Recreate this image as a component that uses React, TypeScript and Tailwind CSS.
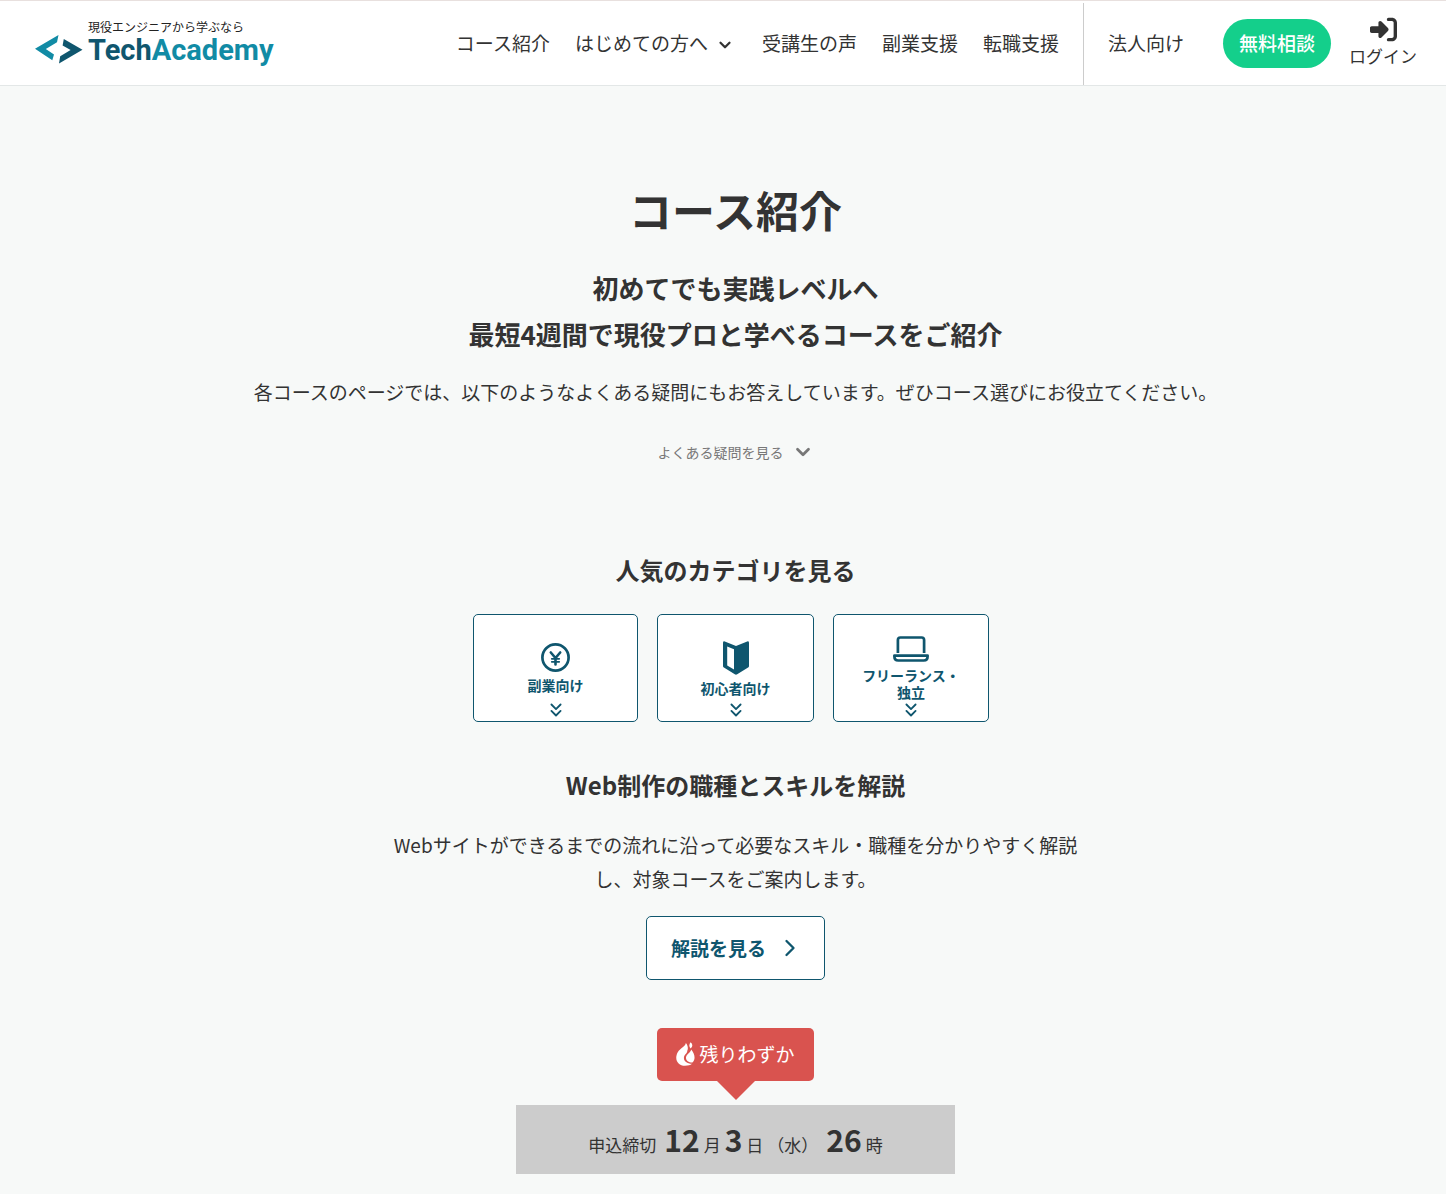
import { ReactNode } from "react";
import { ChevronDown, ChevronRight, ChevronsDown } from "lucide-react";
import { FaRightToBracket } from "react-icons/fa6";

type CategoryType = {
  label: ReactNode;
  icon: ReactNode;
  href: string;
  width: string;
};

const LogoMark: React.FC = () => (
  <svg width="48" height="30" viewBox="0 0 48 30" aria-hidden="true">
    <path d="M23.5 0 L0 13.8 L17.3 25.2 L19 19.5 L10.8 14 L22 7.2 Z" fill="#118ba5" />
    <path d="M28.8 4 L47.5 14.8 L24 28.6 L25.2 21.3 L35.6 15 L27.6 10.4 Z" fill="#0f566e" />
  </svg>
);

const YenIcon: React.FC = () => (
  <svg
    width="29"
    height="29"
    viewBox="0 0 29 29"
    fill="none"
    stroke="currentColor"
    strokeLinecap="round"
    aria-hidden="true"
  >
    <circle cx="14.5" cy="14.5" r="13.1" strokeWidth="2.7" />
    <path d="M9.8 9.5 L14.5 15 L19.2 9.5 M14.5 15 V21.5" strokeWidth="2.6" />
    <path d="M10.8 15.8 H18.2 M10.8 18.8 H18.2" strokeWidth="1.8" />
  </svg>
);

const BeginnerIcon: React.FC = () => (
  <svg width="26" height="34" viewBox="0 0 26 34" aria-hidden="true">
    <path
      fill="currentColor"
      fillRule="evenodd"
      d="M1.8 0.4 L13 5 L24.2 0.4 Q26 0 26 1.8 V25 Q26 26 25.1 26.6 L14.2 33.3 Q13 34 11.8 33.3 L0.9 26.6 Q0 26 0 25 V1.8 Q0 0 1.8 0.4 Z M4.2 5.4 V24.4 L11 28.5 V8.2 Z"
    />
  </svg>
);

const LaptopIcon: React.FC = () => (
  <svg
    width="36"
    height="26"
    viewBox="0 0 36 26"
    fill="none"
    stroke="currentColor"
    strokeWidth="2.7"
    aria-hidden="true"
  >
    <path d="M4.9 17 V4 Q4.9 1.5 7.4 1.5 H28.6 Q31.1 1.5 31.1 4 V17" />
    <path
      d="M1.4 19.6 H34.6 V20.6 Q34.6 24.5 30.8 24.5 H5.2 Q1.4 24.5 1.4 20.6 Z"
      strokeLinejoin="round"
    />
  </svg>
);

const FireIcon: React.FC = () => (
  <svg width="19" height="24" viewBox="0 0 19 24" aria-hidden="true">
    <path
      fill="#fff"
      d="M9.8 1 C9.6 4.5 4.5 5.5 1.6 10.5 C-2 17.5 2 23.7 9 23.7 C12 23.7 14.4 23.2 16 21.8 C9.8 21.8 6.6 17.8 8.4 13.8 C9.4 11.6 11.4 11 11.3 8.8 C12.4 6.5 11.8 3 9.8 1 Z"
    />
    <path fill="#fff" d="M14.6 0.3 C17 2.5 16.8 4.5 14.6 6.6 C12.8 4.5 13 2.5 14.6 0.3 Z" />
    <path
      fill="#fff"
      d="M15.2 7.5 C14.8 10.5 10.5 12 10 15.3 C9.8 18.5 12.4 20.4 16.4 20.4 C19.8 17.5 19 12 15.2 7.5 Z"
    />
  </svg>
);

const categories: CategoryType[] = [
  { label: "副業向け", icon: <YenIcon />, href: "#side-job", width: "w-[165px]" },
  { label: "初心者向け", icon: <BeginnerIcon />, href: "#beginner", width: "w-[157px]" },
  {
    label: (
      <>
        フリーランス・
        <br />
        独立
      </>
    ),
    icon: <LaptopIcon />,
    href: "#freelance",
    width: "w-[156px]",
  },
];

const Header: React.FC = () => {
  return (
    <header className="flex items-center justify-between border-t border-b border-t-[#e8e0de] border-b-[#e3e7e7] bg-white pt-[2px] pr-[29px] pl-[35px]">
      <a href="#top" className="flex items-end pb-1">
        <LogoMark />
        <span className="flex flex-col gap-px pl-[5px]">
          <span className="text-[12px] leading-4 text-[#222]">現役エンジニアから学ぶなら</span>
          <span className="font-['Roboto'] text-[29px] leading-[29px] font-bold text-[#0f566e]">
            Tech<span className="text-[#118ba5]">Academy</span>
          </span>
        </span>
      </a>
      <div className="flex items-center">
        <nav className="flex items-center gap-[25px] pr-6 pb-[2px] text-[19px] whitespace-nowrap">
          <a href="#courses">コース紹介</a>
          <button type="button" className="flex items-center gap-2 pr-[3px]">
            はじめての方へ
            <ChevronDown size={18} strokeWidth={3} className="mt-1" />
          </button>
          <a href="#voice">受講生の声</a>
          <a href="#side">副業支援</a>
          <a href="#career">転職支援</a>
        </nav>
        <div className="flex h-[82px] items-center border-l border-[#ccc] pb-[2px] pl-6 whitespace-nowrap">
          <a href="#corporate" className="text-[19px]">
            法人向け
          </a>
          <a
            href="#consult"
            className="ml-[39px] rounded-full bg-[#14cf8b] px-4 pt-[9px] pb-[11px] text-[19px] leading-[29px] font-medium text-white"
          >
            無料相談
          </a>
          <a
            href="#login"
            className="ml-[18px] flex flex-col items-center gap-px pb-[3px] text-[17px] leading-6"
          >
            <FaRightToBracket size={27} />
            ログイン
          </a>
        </div>
      </div>
    </header>
  );
};

const App: React.FC = () => {
  return (
    <div
      id="top"
      className="min-h-screen bg-[#f7f9f8] pb-5 font-['Noto_Sans_CJK_JP',sans-serif] text-[#333]"
      lang="ja"
    >
      <Header />
      <main className="flex flex-col items-center pt-[91px] pl-[25px] text-center">
        <h1 className="text-[43px] leading-[64px] font-bold">コース紹介</h1>
        <p className="mt-6 text-[26px] leading-[46px] font-bold">
          初めてでも実践レベルへ
          <br />
          最短4週間で現役プロと学べるコースをご紹介
        </p>
        <p className="mt-[18px] text-[19px] leading-[34px]">
          各コースのページでは、以下のようなよくある疑問にもお答えしています。ぜひコース選びにお役立てください。
        </p>
        <button
          type="button"
          className="mt-[31px] flex items-center gap-2 text-[14px] leading-6 text-[#777]"
        >
          よくある疑問を見る
          <ChevronDown size={22} strokeWidth={3} />
        </button>

        <h2 className="mt-[88px] text-[24px] leading-9 font-bold">人気のカテゴリを見る</h2>
        <div className="mt-[26px] flex gap-[19px] pr-[9px]">
          {categories.map((category) => (
            <a
              key={category.href}
              href={category.href}
              className={`${category.width} flex h-[108px] flex-col items-center rounded-[5px] border border-[#0f566e] bg-white text-[#0f566e]`}
            >
              <span className="flex flex-1 flex-col items-center justify-center gap-[5px] pt-[17px] text-[14px] leading-[17px] font-bold">
                {category.icon}
                <span>{category.label}</span>
              </span>
              <ChevronsDown size={22} strokeWidth={2} className="-mt-1.5" />
            </a>
          ))}
        </div>

        <h2 className="mt-[45px] text-[24px] leading-9 font-bold">Web制作の職種とスキルを解説</h2>
        <p className="mt-[25px] max-w-[700px] text-[19px] leading-[34px]">
          Webサイトができるまでの流れに沿って必要なスキル・職種を分かりやすく解説し、対象コースをご案内します。
        </p>
        <a
          href="#guide"
          className="mt-5 flex h-16 items-center gap-[10px] rounded-[5px] border border-[#0f566e] bg-white pr-5 pl-6 text-[19px] font-bold text-[#0f566e]"
        >
          解説を見る
          <ChevronRight size={28} strokeWidth={2} />
        </a>

        <div className="mt-12 flex items-center gap-1 rounded-[5px] bg-[#d9534f] px-[19px] pb-px text-[19px] leading-[52px] text-white">
          <FireIcon />
          残りわずか
        </div>
        <svg width="38" height="19" viewBox="0 0 38 19" aria-hidden="true">
          <path d="M0 0 H38 L19 19 Z" fill="#d9534f" />
        </svg>
        <p className="mt-[5px] flex h-[69px] w-full max-w-[439px] items-baseline justify-center bg-[#ccc] text-[17px] leading-[68px]">
          申込締切
          <strong className="mr-1 ml-2 text-[30px]">12</strong>
          月
          <strong className="mx-1 text-[30px]">3</strong>
          日
          <span className="ml-1">（水）</span>
          <strong className="mr-1 ml-2 text-[30px]">26</strong>
          時
        </p>
      </main>
    </div>
  );
};

export default App;
